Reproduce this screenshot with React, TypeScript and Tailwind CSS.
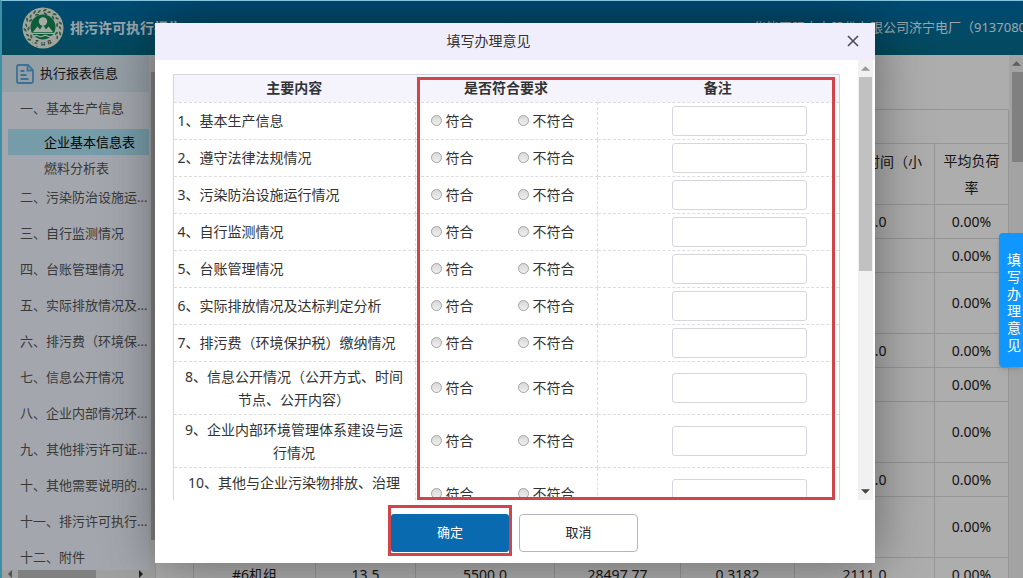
import type { ReactNode } from "react";

const LEAVES = Array.from({ length: 9 }, (_, i) => 196 + i * 34);

function Logo() {
  return (
    <svg viewBox="0 0 42 42" className="size-[42px] shrink-0" aria-hidden="true">
      <circle cx="21" cy="21" r="20.5" fill="#eaf4e8" />
      <g fill="#4b8a68">
        {LEAVES.map((a) => (
          <g key={a} transform={`rotate(${a} 21 21)`}>
            <ellipse cx="21" cy="3" rx="1" ry="2.1" transform="rotate(55 21 3)" />
            <ellipse cx="22" cy="6.600" rx="1" ry="2" transform="rotate(115 22 6.600)" />
            <ellipse cx="25.500" cy="4.600" rx="0.900" ry="1.900" transform="rotate(75 25.500 4.600)" />
          </g>
        ))}
      </g>
      <circle cx="21" cy="20" r="12.500" fill="#138a52" />
      <circle cx="21" cy="14.500" r="4.200" fill="#f4fbf4" />
      <path d="M11 25l4.500-5.500 2.500 3 3-4.500 3 4.500 2.500-3 4.500 5.500z" fill="#f4fbf4" />
      <path d="M9.500 26.300h23M12 29q2.200-1.400 4.500 0t4.500 0 4.500 0 4.500 0" stroke="#f4fbf4" strokeWidth="1.200" fill="none" />
      <path d="M9 32q12 5 24 0l-3 6q-9 4-18 0z" fill="#eaf4e8" />
      <g fontSize="5.500" fontWeight="700" textAnchor="middle" fill="#2d4a3c" fontFamily="Liberation Sans">
        <text x="14" y="37" transform="rotate(14 14 37)">Z</text>
        <text x="21" y="38.800">H</text>
        <text x="28" y="37" transform="rotate(-14 28 37)">B</text>
      </g>
    </svg>
  );
}

function ReportIcon() {
  return (
    <svg viewBox="0 0 18 20" className="h-5 w-[18px] shrink-0" fill="none" stroke="#5ca5dc" strokeWidth="1.800" aria-hidden="true">
      <path d="M2.500 1h9.500l5 5v11.500a1.500 1.500 0 0 1-1.500 1.500h-13a1.500 1.500 0 0 1-1.500-1.500v-15a1.500 1.500 0 0 1 1.500-1.500z" />
      <path d="M11.500 1v5.500h5.500M4.500 7h4M4.500 11h6M4.500 15h8" />
    </svg>
  );
}

function Arrow({ dir, className }: { dir: "up" | "down" | "left" | "right"; className: string }) {
  const d = { up: "M0 6l4-4 4 4z", down: "M0 2l4 4 4-4z", left: "M6 0l-4 4 4 4z", right: "M2 0l4 4-4 4z" }[dir];
  return (
    <svg viewBox="0 0 8 8" className={className} fill="currentColor" aria-hidden="true">
      <path d={d} />
    </svg>
  );
}

const SECTIONS = [
  "二、污染防治设施运...",
  "三、自行监测情况",
  "四、台账管理情况",
  "五、实际排放情况及...",
  "六、排污费（环境保...",
  "七、信息公开情况",
  "八、企业内部情况环...",
  "九、其他排污许可证...",
  "十、其他需要说明的...",
  "十一、排污许可执行...",
  "十二、附件",
];

function Sidebar() {
  return (
    <nav className="flex w-[153px] shrink-0 bg-[#f0f6ff] text-[13px] text-[#555]">
      <div className="flex min-w-0 flex-1 flex-col">
        <h2 className="flex h-[37px] shrink-0 items-center gap-1.5 bg-[#dcebf5] pl-3.5 text-[#222]">
          <ReportIcon />
          执行报表信息
        </h2>
        <a href="#s1" className="mb-[5px] h-8 shrink-0 pl-[18px] leading-8">一、基本生产信息</a>
        <a href="#s1-1" className="ml-1.5 h-[26px] shrink-0 bg-[#b0e6fa] pl-9 leading-[26px] text-black">企业基本信息表</a>
        <a href="#s1-2" className="h-[25px] shrink-0 pl-[42px] leading-[27px]">燃料分析表</a>
        {SECTIONS.map((s) => (
          <a key={s} href="#section" className="h-9 shrink-0 whitespace-nowrap pl-[18px] leading-[35px]">
            {s}
          </a>
        ))}
        <div className="-mt-1.5 flex h-2 shrink-0 items-center bg-[#ececec] pl-1 text-[#777]">
          <Arrow dir="left" className="size-2" />
          <div className="ml-1 h-full w-[78px] bg-[#bdbdbd]" />
          <Arrow dir="right" className="mr-1 ml-auto size-2 text-[#333]" />
        </div>
      </div>
      <div className="w-1.5 shrink-0 bg-[#f1f1f1] pt-[17px]">
        <div className="ml-0.5 h-[468px] bg-[#bdbdbd]" />
      </div>
    </nav>
  );
}

const DATA = [
  { h: "h-[34px]", hours: "2111.0" },
  { h: "h-[34px]", hours: "" },
  { h: "h-[61px]", hours: "" },
  { h: "h-[34px]", hours: "2111.0" },
  { h: "h-[34px]", hours: "" },
  { h: "h-[61px]", hours: "" },
  { h: "h-[34px]", hours: "2111.0" },
  { h: "h-[61px]", hours: "" },
];

function ReportTable() {
  const cell = "border border-[#ddd] p-0";
  return (
    <table className="w-full table-fixed border-collapse border border-[#ddd] text-center text-sm text-[#222]">
      <colgroup>
        <col className="w-[38px]" />
        <col className="w-[122px]" />
        <col className="w-[100px]" />
        <col className="w-[139px]" />
        <col className="w-[126px]" />
        <col className="w-[114px]" />
        <col className="w-[140px]" />
        <col />
      </colgroup>
      <thead>
        <tr className="h-[34px]">
          <td colSpan={8} className={cell} />
        </tr>
        <tr className="h-[61px]">
          <td colSpan={6} className={cell} />
          <th className="border border-[#ddd] pt-1 pr-3 text-right align-top leading-[27px] font-normal">时间（小</th>
          <th className="border border-[#ddd] px-2 leading-[27px] font-normal">平均负荷率</th>
        </tr>
      </thead>
      <tbody>
        {DATA.map((r, i) => (
          <tr key={i} className={r.h}>
            <td colSpan={6} className={cell} />
            <td className={cell}>{r.hours}</td>
            <td className={cell}>0.00%</td>
          </tr>
        ))}
        <tr className="h-[34px]">
          <td className={cell} />
          <td className={cell}>#6机组</td>
          <td className={cell}>13.5</td>
          <td className={cell}>5500.0</td>
          <td className={cell}>28497.77</td>
          <td className={cell}>0.3182</td>
          <td className={cell}>2111.0</td>
          <td className={cell}>0.00%</td>
        </tr>
      </tbody>
    </table>
  );
}

const QUESTIONS: string[][] = [
  ["1、基本生产信息"],
  ["2、遵守法律法规情况"],
  ["3、污染防治设施运行情况"],
  ["4、自行监测情况"],
  ["5、台账管理情况"],
  ["6、实际排放情况及达标判定分析"],
  ["7、排污费（环境保护税）缴纳情况"],
  ["8、信息公开情况（公开方式、时间", "节点、公开内容）"],
  ["9、企业内部环境管理体系建设与运", "行情况"],
  ["10、其他与企业污染物排放、治理"],
];

function Choice({ name, children }: { name: string; children: ReactNode }) {
  return (
    <label className="flex items-center gap-1">
      <input
        type="radio"
        name={name}
        className="size-[11px] appearance-none rounded-full border border-[#a5a5a5] bg-linear-to-b from-[#d8d8d8] to-[#efefef] checked:bg-[#555]"
      />
      {children}
    </label>
  );
}

function OpinionTable() {
  return (
    <table className="w-full table-fixed border-collapse border border-[#d5d5e0] text-sm text-[#333]">
      <colgroup>
        <col className="w-[242px]" />
        <col className="w-[182px]" />
        <col />
      </colgroup>
      <thead>
        <tr className="h-7 border-b border-dashed border-[#d5d5dd] bg-[#f5f4fd] font-bold">
          <th>主要内容</th>
          <th>是否符合要求</th>
          <th>备注</th>
        </tr>
      </thead>
      <tbody>
        {QUESTIONS.map((lines, i) => (
          <tr key={i} className={i < 7 ? "h-[37px]" : "h-[53px]"}>
            <td className={i < 7 ? "border border-dashed border-[#ddd] pl-1" : "border border-dashed border-[#ddd] pt-[3px] text-center align-top leading-[23px]"}>
              {lines.map((l) => (
                <span key={l} className="block whitespace-nowrap">{l}</span>
              ))}
            </td>
            <td className="border border-dashed border-[#ddd] pl-[15px]">
              <div className="flex">
                <div className="w-[87px]">
                  <Choice name={`q${i}`}>符合</Choice>
                </div>
                <Choice name={`q${i}`}>不符合</Choice>
              </div>
            </td>
            <td className="border border-dashed border-[#ddd] pr-8 text-right">
              <input
                type="text"
                aria-label={`${lines[0]} 备注`}
                className="inline-block h-[30px] w-[135px] rounded-[3px] border border-[#d6d6de] bg-white px-2 align-middle"
              />
            </td>
          </tr>
        ))}
      </tbody>
    </table>
  );
}

function OpinionDialog() {
  return (
    <section role="dialog" aria-label="填写办理意见" className="flex h-[540px] w-[720px] flex-col bg-white shadow-[1px_1px_50px_rgba(0,0,0,0.4)]">
      <header className="flex h-[37px] shrink-0 items-center bg-[#f0eefc] pr-3 pl-5 text-sm text-[#333]">
        <h1 className="flex-1 pr-10 text-center">填写办理意见</h1>
        <button type="button" aria-label="关闭" className="flex size-5 items-center justify-center">
          <svg viewBox="0 0 12 12" className="size-3" stroke="#4b4b58" strokeWidth="1.600" aria-hidden="true">
            <path d="M1 1l10 10M11 1l-10 10" />
          </svg>
        </button>
      </header>
      <div className="relative flex h-[440px] shrink-0 overflow-hidden pr-0.5">
        <div className="min-w-0 flex-1 px-[18px] pt-3.5">
          <OpinionTable />
        </div>
        <div className="flex w-[15px] shrink-0 flex-col items-center bg-[#f1f1f1] text-[#999]">
          <Arrow dir="up" className="my-1 size-[9px] shrink-0" />
          <div className="h-[194px] w-[13px] bg-[#c1c1c1]" />
          <Arrow dir="down" className="mt-auto mb-1 size-[9px] shrink-0 text-[#444]" />
        </div>
        <div className="pointer-events-none absolute top-[17px] right-10 bottom-0 left-[262px] border-3 border-[#d0444a]" />
      </div>
      <footer className="flex flex-1 items-center justify-center gap-2.5 pt-1">
        <div className="relative">
          <button type="button" className="block h-[38px] w-[118px] rounded-[3px] bg-[#0a6ab0] text-[13px] text-white">确定</button>
          <div className="pointer-events-none absolute -inset-x-[3px] -top-[9px] -bottom-1 border-3 border-[#d0444a]" />
        </div>
        <button type="button" className="h-[38px] w-[119px] rounded border border-[#b5b5c0] bg-white text-[13px] text-[#222]">取消</button>
      </footer>
    </section>
  );
}

export default function App() {
  return (
    <div className="relative flex h-screen flex-col overflow-hidden border-t border-l-2 border-t-[#86c3dd] border-l-[#3d8fa5] bg-white font-['Noto_Sans','Noto_Sans_CJK_SC',sans-serif]">
      <header className="flex h-[54px] shrink-0 items-center bg-linear-to-b from-[#016dab] to-[#086c88] pl-5 text-[#e4f3fc]">
        <Logo />
        <span className="ml-1.5 text-sm font-bold whitespace-nowrap">排污许可执行报告</span>
        <span className="ml-auto w-[270px] shrink-0 text-[13px] whitespace-nowrap">华能国际电力股份有限公司济宁电厂（9137080</span>
      </header>
      <div className="flex min-h-0 flex-1">
        <Sidebar />
        <main className="min-w-0 flex-1 pt-[54px]">
          <ReportTable />
        </main>
        <div className="flex w-3.5 shrink-0 flex-col items-center bg-[#f1f1f1] text-[#888]">
          <Arrow dir="up" className="mt-1 mb-1 size-[9px] shrink-0" />
          <div className="ml-auto h-[90px] w-[11px] bg-[#bdbdbd]" />
        </div>
      </div>
      <div className="absolute inset-0 flex items-center justify-center bg-black/32 pt-1.5 pl-1">
        <OpinionDialog />
      </div>
      <button
        type="button"
        className="absolute top-[232px] right-0 flex h-[134px] w-6 items-center justify-center rounded-l bg-[#0f96ff] pt-1 pl-1.5 text-sm leading-[17px] text-white shadow-md"
      >
        <span className="w-3.5 break-all">填写办理意见</span>
      </button>
    </div>
  );
}
